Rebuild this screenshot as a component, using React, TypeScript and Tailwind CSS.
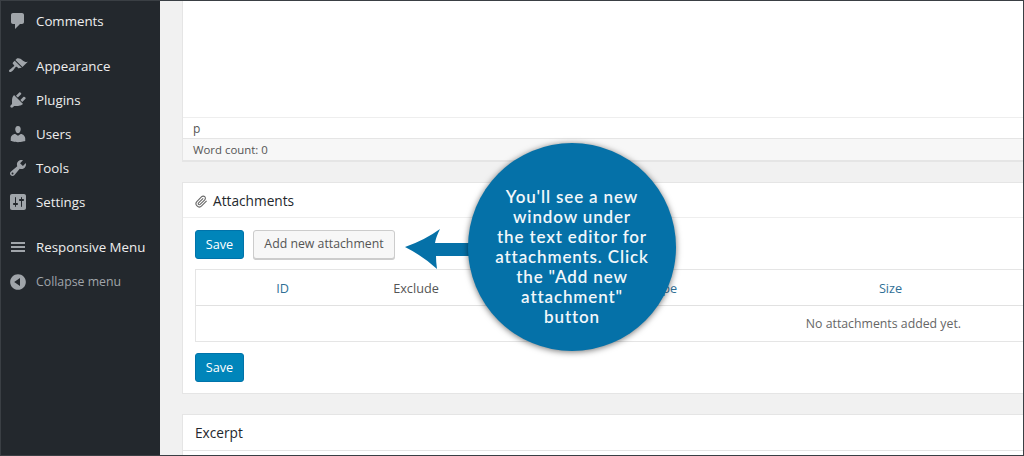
import React from "react";

const icons: Record<string, string> = {
  comments:
    "M5 2h9c1.1 0 2 .9 2 2v7c0 1.1-.9 2-2 2h-2l-5 5v-5H5c-1.1 0-2-.9-2-2V4c0-1.1.9-2 2-2z",
  appearance:
    "M14.48 11.06L7.41 3.99l1.5-1.5c.5-.56 2.3-.47 3.51.32 1.21.8 1.43 1.28 2.91 2.1 1.18.64 2.45 1.26 4.45.85zm-.71.71L6.7 4.7 4.93 6.47c-.39.39-.39 1.02 0 1.41l1.06 1.06c.39.39.39 1.03 0 1.42-.6.6-1.43 1.11-2.21 1.69-.35.26-.7.53-1.01.84C1.43 13.23.4 14.8 1.32 15.72c.92.92 2.49-.11 3.83-1.45.31-.31.58-.66.84-1.01.58-.78 1.09-1.61 1.69-2.21.39-.39 1.03-.39 1.42 0l1.06 1.06c.39.39 1.02.39 1.41 0z",
  plugins:
    "M13.11 4.36L9.87 7.6 8 5.73l3.24-3.24c.35-.34 1.05-.2 1.56.32.52.51.66 1.21.31 1.55zm-8 1.77l.91-1.12 9.01 9.01-1.19.84c-.71.71-2.63 1.16-3.82 1.16H6.14L4.9 17.26c-.59.59-1.54.59-2.12 0-.59-.58-.59-1.53 0-2.12l1.24-1.24v-3.88c0-1.13.4-3.19 1.09-3.89zm7.26 3.97l3.24-3.24c.34-.35 1.04-.21 1.55.31.52.51.66 1.21.31 1.55l-3.24 3.25z",
  users:
    "M10 9.25c-2.27 0-2.73-3.44-2.73-3.44C7 4.02 7.82 2 9.97 2c2.16 0 2.98 2.02 2.71 3.81 0 0-.41 3.44-2.68 3.44zm0 2.57L12.72 10c2.39 0 4.52 2.33 4.52 4.53v2.49s-3.65 1.13-7.24 1.13c-3.65 0-7.24-1.13-7.24-1.13v-2.49c0-2.25 1.94-4.48 4.47-4.48z",
  tools:
    "M16.68 9.77c-1.34 1.34-3.3 1.67-4.95.99l-5.41 6.52c-.99.99-2.59.99-3.58 0s-.99-2.59 0-3.57l6.52-5.42c-.68-1.65-.35-3.61.99-4.95 1.28-1.28 3.12-1.62 4.72-1.06l-2.89 2.89 2.82 2.82 2.86-2.87c.53 1.58.18 3.39-1.08 4.65zM3.81 16.21c.4.39 1.04.39 1.43 0 .4-.4.4-1.04 0-1.43-.39-.4-1.03-.4-1.43 0-.39.39-.39 1.03 0 1.43z",
  settings:
    "M18 16V4c0-1.1-.9-2-2-2H4c-1.1 0-2 .9-2 2v12c0 1.1.9 2 2 2h12c1.1 0 2-.9 2-2zM8 11h1c.55 0 1 .45 1 1s-.45 1-1 1H8v1.5c0 .28-.22.5-.5.5s-.5-.22-.5-.5V13H6c-.55 0-1-.45-1-1s.45-1 1-1h1V5.5c0-.28.22-.5.5-.5s.5.22.5.5V11zm5-2h-1c-.55 0-1-.45-1-1s.45-1 1-1h1V5.5c0-.28.22-.5.5-.5s.5.22.5.5V7h1c.55 0 1 .45 1 1s-.45 1-1 1h-1v5.5c0 .28-.22.5-.5.5s-.5-.22-.5-.5V9z",
  menu: "M17 7V5H3v2h14zm0 4V9H3v2h14zm0 4v-2H3v2h14z",
  collapse:
    "M10 2.16c4.33 0 7.84 3.51 7.84 7.84s-3.51 7.84-7.84 7.84S2.16 14.33 2.16 10 5.71 2.16 10 2.16zm2 11.72V6.12L6.18 9.97z",
};

function MenuItem({
  icon,
  label,
  muted,
}: {
  icon: string;
  label: string;
  muted?: boolean;
}): React.JSX.Element {
  return (
    <div className="h-[34px] flex flex-row items-center">
      <svg viewBox="0 0 20 20" className="w-5 h-5 ml-[8px] shrink-0 fill-[#a0a5aa]">
        <path d={icons[icon]} />
      </svg>
      <span
        className={
          muted
            ? "ml-[8px] text-[12.3px] text-[#a0a5aa]"
            : "ml-[8px] pt-[2px] text-[13.3px] text-[#eeeeee]"
        }
      >
        {label}
      </span>
    </div>
  );
}

function SaveButton(): React.JSX.Element {
  return (
    <button className="w-[49px] h-[29px] rounded-[3px] bg-[#0085ba] border border-[#0073aa] text-white text-[12.7px]">
      Save
    </button>
  );
}

export default function App(): React.JSX.Element {
  return (
    <div className="relative w-[1024px] h-[456px] overflow-hidden flex flex-row bg-[#f1f1f1] font-['Open_Sans','Noto_Sans',sans-serif]">
      <div className="w-[160px] h-full shrink-0 bg-[#23282d] pt-[4px] flex flex-col">
        <MenuItem icon="comments" label="Comments" />
        <div className="h-[11px]" />
        <MenuItem icon="appearance" label="Appearance" />
        <MenuItem icon="plugins" label="Plugins" />
        <MenuItem icon="users" label="Users" />
        <MenuItem icon="tools" label="Tools" />
        <MenuItem icon="settings" label="Settings" />
        <div className="h-[11px]" />
        <MenuItem icon="menu" label="Responsive Menu" />
        <div className="h-px" />
        <MenuItem icon="collapse" label="Collapse menu" muted />
      </div>

      <div className="flex-1 min-w-0 pl-[22px] pr-px flex flex-col">
        <div className="h-[162px] shrink-0 bg-white border-l border-b-2 border-[#e5e5e5] flex flex-col">
          <div className="h-[118px] border-b border-[#eeeeee]" />
          <div className="h-[20px] pl-[10px] pt-[2px] flex items-center text-[12px] text-[#555555]">p</div>
          <div className="flex-1 pl-[10px] pt-px bg-[#f7f7f7] border-t border-[#e5e5e5] flex items-center text-[11.4px] text-[#555555]">
            Word count: 0
          </div>
        </div>

        <div className="mt-[20px] h-[212px] shrink-0 bg-white border-l border-y border-[#e5e5e5] flex flex-col">
          <div className="h-[35px] shrink-0 pl-[12px] pt-[2px] border-b border-[#eeeeee] flex items-center gap-[5px] text-[13.7px] text-[#23282d]">
            <svg
              viewBox="0 0 24 24"
              className="w-[13px] h-[13px] fill-none stroke-[#666666] stroke-2"
            >
              <path d="m21.44 11.05-9.19 9.19a6 6 0 0 1-8.49-8.49l8.57-8.57A4 4 0 1 1 18 8.84l-8.59 8.57a2 2 0 0 1-2.83-2.83l8.49-8.48" />
            </svg>
            Attachments
          </div>
          <div className="pl-[12px] pt-[12px] flex flex-col">
            <div className="flex flex-row items-center gap-[9px]">
              <SaveButton />
              <button className="w-[142px] h-[29px] rounded-[3px] bg-[#f7f7f7] border border-[#cccccc] shadow-[0_1px_0_#cccccc] text-[#555555] text-[12.3px]">
                Add new attachment
              </button>
            </div>
            <div className="mt-[10px] h-[73px] border-l border-y border-[#e5e5e5] flex flex-col">
              <div className="h-[36px] shrink-0 pt-[2px] border-b border-[#e1e1e1] grid grid-cols-[173px_94px_105px_190px_1fr] items-center text-center text-[12.7px]">
                <span className="text-[#2f6f96]">ID</span>
                <span className="text-[#555555]">Exclude</span>
                <span />
                <span className="text-[#2f6f96]">Type</span>
                <span className="text-[#2f6f96]">Size</span>
              </div>
              <div className="flex-1 pt-[1px] flex items-center justify-end pr-[62px] text-[12.3px] text-[#666666]">
                No attachments added yet.
              </div>
            </div>
            <div className="mt-[11px]">
              <SaveButton />
            </div>
          </div>
        </div>

        <div className="mt-[20px] h-[37px] shrink-0 bg-white border-l border-y border-[#e5e5e5] pl-[12px] pt-[2px] flex items-center text-[13.7px] text-[#23282d]">
          Excerpt
        </div>
        <div className="flex-1 bg-white border-l border-[#e5e5e5]" />
      </div>

      {/* frame round the screenshot */}
      <div className="absolute inset-0 border border-[#3a3f44] pointer-events-none" />

      {/* callout */}
      <svg
        viewBox="0 0 70 44"
        className="absolute left-[405px] top-[228px] w-[70px] h-[44px] fill-[#0571a8]"
      >
        <path d="M0 19 Q20 12 35 1 Q31 9 30 15 L70 15 V28 L31 28 Q31 34 32 41 Q18 28 0 19 Z" />
      </svg>
      <div className="absolute left-[468px] top-[143px] w-[208px] h-[208px] rounded-full bg-[#0571a8] pt-[19px] shadow-[0_1px_6px_rgba(0,0,0,0.55)] flex items-center justify-center text-center text-[#f2f7fa] text-[17px] leading-[20px] font-semibold tracking-[0.85px] font-['Lato','Open_Sans',sans-serif]">
        <div>
          You'll see a new
          <br />
          window under
          <br />
          the text editor for
          <br />
          attachments. Click
          <br />
          the "Add new
          <br />
          attachment"
          <br />
          button
        </div>
      </div>
    </div>
  );
}
